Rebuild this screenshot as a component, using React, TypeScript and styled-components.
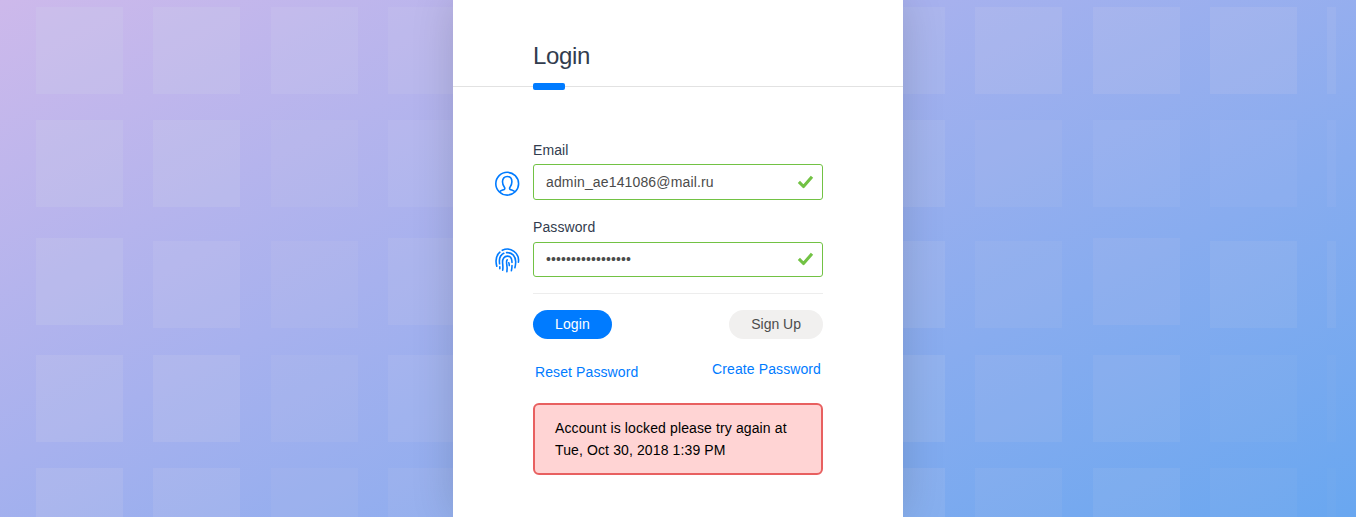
import React from "react";
import styled, { createGlobalStyle } from "styled-components";

const GlobalStyle = createGlobalStyle`
  * { box-sizing: border-box; }
  body { margin: 0; overflow: hidden; font-family: "Liberation Sans", Arial, sans-serif; font-size: 14px; letter-spacing: 0.1px; }
`;

const Page = styled.main`
  display: grid;
  grid-template: 517px / 1fr;
  justify-items: center;
  overflow: hidden;
  background: linear-gradient(153.5deg, #cdb9eb 0%, #a7b1ee 39%, #69a7f0 100%);
`;

const Tiles = styled.div`
  grid-area: 1 / 1;
  justify-self: start;
  width: 1336px;
  height: 517px;
  padding-left: 36px;
  display: flex;
  gap: 30.42px;
  overflow: hidden;
`;

const TileColumn = styled.div<{ $short: boolean }>`
  flex: 0 0 87px;
  display: grid;
  padding-top: 7px;
  grid-template-rows: 113.4px ${(p) => (p.$short ? "117.3px 117.3px" : "120.6px 114px")} 113px 87px;
`;

const Tile = styled.span<{ $alpha: number }>`
  height: 87px;
  background: rgba(210, 212, 236, ${(p) => p.$alpha * 0.66});
`;

const Panel = styled.section`
  grid-area: 1 / 1;
  width: 450px;
  height: 517px;
  background: #fff;
  box-shadow: 0 0 40px rgba(0, 0, 0, 0.15);
`;

const Header = styled.header`
  height: 87px;
  padding: 41px 80px 0;
  border-bottom: 1px solid #e2e2e2;
`;

const Title = styled.h1`
  margin: 0;
  font-size: 24px;
  line-height: 30px;
  font-weight: 400;
  letter-spacing: -0.35px;
  color: #323c4e;
`;

const Accent = styled.div`
  width: 32px;
  height: 7px;
  margin-top: 12px;
  border-radius: 2px;
  background: #007bff;
`;

const Form = styled.form`
  padding: 53px 80px 0;
`;

const Field = styled.div`
  height: 77px;

  & + & {
    height: 78px;
  }
`;

const Label = styled.label<{ $gap: number }>`
  display: block;
  height: 20px;
  margin-bottom: ${(p) => p.$gap}px;
  line-height: 20px;
  color: #323c4e;
`;

const Row = styled.div`
  display: flex;
  align-items: center;
  margin-left: -38px;
`;

const IconSlot = styled.span`
  width: 38px;
  height: 25px;
  padding-top: 1px;
  flex: none;
  color: #007bff;

  svg {
    display: block;
  }
`;

const InputBox = styled.div<{ $height: number; $spacing: number }>`
  flex: 1;
  height: ${(p) => p.$height}px;
  display: flex;
  align-items: center;
  justify-content: space-between;
  padding: 0 8px ${(p) => (p.$height === 35 ? 1 : 0)}px 12px;
  border: 1px solid #72c244;
  border-radius: 3px;
  letter-spacing: ${(p) => p.$spacing}px;
  color: #4b4b4b;
`;

const Actions = styled.div`
  display: flex;
  justify-content: space-between;
  margin-top: -2px;
  padding-top: 16px;
  border-top: 1px solid #ededed;
`;

const Button = styled.button<{ $primary?: boolean }>`
  height: 29px;
  padding: 0 22px 1px;
  border: 0;
  border-radius: 15px;
  font: inherit;
  letter-spacing: ${(p) => (p.$primary ? 0.15 : 0)}px;
  background: ${(p) => (p.$primary ? "#007bff" : "#f1f0ef")};
  color: ${(p) => (p.$primary ? "#fff" : "#4c4c4c")};
`;

const Links = styled.div`
  display: flex;
  justify-content: space-between;
  align-items: flex-start;
  padding: 20px 2px 0;
`;

const Link = styled.a<{ $lowered?: boolean }>`
  color: #007bff;
  line-height: 20px;
  margin-top: ${(p) => (p.$lowered ? 3 : 0)}px;
`;

const Alert = styled.div`
  height: 72px;
  margin-top: 21px;
  padding: 12px 20px;
  border: 2px solid #e86060;
  border-radius: 6px;
  background: #ffd4d4;
  color: #000;
  line-height: 22px;
  letter-spacing: 0.12px;
`;

const alphas = [
  [0.3, 0.3, 0.3, 0.28, 0.28],
  [0.3, 0.3, 0.25, 0.28, 0.24],
  [0.27, 0.14, 0.15, 0.14, 0.13],
  [0.24, 0.18, 0.2, 0.18, 0.14],
  [0.2, 0.2, 0.2, 0.2, 0.2],
  [0.2, 0.2, 0.2, 0.2, 0.2],
  [0.2, 0.2, 0.2, 0.2, 0.2],
  [0.22, 0.22, 0.22, 0.22, 0.2],
  [0.24, 0.13, 0.13, 0.14, 0.13],
  [0.24, 0.11, 0.16, 0.14, 0.14],
  [0.24, 0.1, 0.15, 0.07, 0.08],
  [0.17, 0.1, 0.13, 0.05, 0.04],
];
const shortColumns = [0, 3, 9];

const UserIcon = () => (
  <svg width="26" height="26" viewBox="0 0 26 26" fill="none" stroke="currentColor" strokeWidth="1.6">
    <circle cx="12.2" cy="12.7" r="11.4" />
    <path d="M4.500 20.800c1.200-1.400 3.300-1.600 4.700-2.300.8-.4.8-1.500.2-2.300C8.300 14.800 7.500 13.300 7.500 10.800c0-3.400 1.900-5.300 4.700-5.300s4.700 1.900 4.700 5.300c0 2.500-.8 4-1.900 5.400-.6.8-.6 1.900.2 2.300 1.400.7 3.500.9 4.700 2.300" />
  </svg>
);

const FingerprintIcon = () => (
  <svg width="26" height="26" viewBox="0 0 26 26" fill="none" stroke="currentColor" strokeWidth="1.6" strokeLinecap="round">
    <path d="M7.300 2.300A11.300 11.300 0 0 1 23.400 14.200" />
    <path d="M4.900 4.200C1.400 7.200.1 12 1.800 18.200" />
    <path d="M4.800 20.700v-2" />
    <path d="M4.600 15.800C3.700 9.800 5.900 6.700 8.800 5.300" />
    <path d="M11.600 4.600c5.600-.3 9.300 3.900 9.100 9.700-.1 2.200-.4 4-.8 5.400" />
    <path d="M7.700 22.200c.5-2.600.1-4.700-.1-7.200C7.200 10.800 9.300 8.100 12.300 8.100c2.500 0 4.200 1.500 4.500 4.400l.2 2" />
    <path d="M17 17.500c0 1.800-.2 3.500-.6 5.100" />
    <path d="M11.900 23.700c.5-3 .2-5.700-.3-8.500-.2-1.500-.1-2.600.6-3.300" />
    <path d="M13.800 14.800c.4 1 .5 1.800.5 2.800" />
  </svg>
);

const Check = () => (
  <svg width="17" height="16" viewBox="0 0 17 16" fill="none" stroke="#72c244" strokeWidth="3.100">
    <path d="M1.900 7.900L6.500 12.500L15 2.800" strokeLinejoin="round" />
  </svg>
);

export default function App() {
  return (
    <Page>
      <GlobalStyle />
      <Tiles aria-hidden>
        {alphas.map((column, i) => (
          <TileColumn key={i} $short={shortColumns.includes(i)}>
            {column.map((alpha, j) => <Tile key={j} $alpha={alpha} />)}
          </TileColumn>
        ))}
      </Tiles>
      <Panel>
        <Header>
          <Title>Login</Title>
          <Accent />
        </Header>
        <Form>
          <Field>
            <Label $gap={4}>Email</Label>
            <Row>
              <IconSlot><UserIcon /></IconSlot>
              <InputBox $height={36} $spacing={0.15}>admin_ae141086@mail.ru<Check /></InputBox>
            </Row>
          </Field>
          <Field>
            <Label $gap={5}>Password</Label>
            <Row>
              <IconSlot><FingerprintIcon /></IconSlot>
              <InputBox $height={35} $spacing={0.1}>•••••••••••••••••<Check /></InputBox>
            </Row>
          </Field>
          <Actions>
            <Button type="button" $primary>Login</Button>
            <Button type="button">Sign Up</Button>
          </Actions>
          <Links>
            <Link $lowered>Reset Password</Link>
            <Link>Create Password</Link>
          </Links>
          <Alert>Account is locked please try again at<br />Tue, Oct 30, 2018 1:39 PM</Alert>
        </Form>
      </Panel>
    </Page>
  );
}
